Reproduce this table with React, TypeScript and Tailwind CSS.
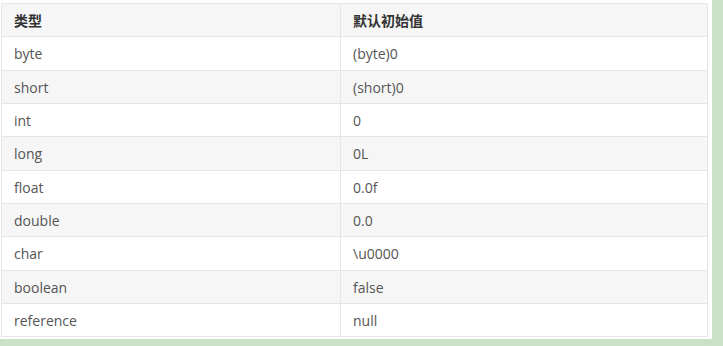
const rows: [string, string][] = [
  ["byte", "(byte)0"],
  ["short", "(short)0"],
  ["int", "0"],
  ["long", "0L"],
  ["float", "0.0f"],
  ["double", "0.0"],
  ["char", "\\u0000"],
  ["boolean", "false"],
  ["reference", "null"],
]

export default function App() {
  return (
    <div className="h-[346px] w-[723px] bg-[#c9e2c5] font-['Open_Sans','Noto_Sans_CJK_SC',sans-serif]">
      <div className="h-[339px] w-[712px] bg-white pl-[1px] pt-[3px]">
        <table className="w-[707px] border-collapse border border-[#e3e3e3] text-[14px] text-[#555]">
          <thead>
            <tr className="h-[33px] bg-[#f6f6f6]">
              <th className="w-[339px] border border-[#e6e6e6] px-3 text-left font-bold text-[#333]">类型</th>
              <th className="border border-[#e6e6e6] px-3 text-left font-bold text-[#333]">默认初始值</th>
            </tr>
          </thead>
          <tbody>
            {rows.map(([t, v], i) => (
              <tr
                key={t}
                className={
                  (i % 3 === 0 ? "h-[34px] " : "h-[33px] ") + (i % 2 === 1 ? "bg-[#f6f6f6]" : "bg-white")
                }
              >
                <td className="border border-[#e6e6e6] px-3">{t}</td>
                <td className="border border-[#e6e6e6] px-3">{v}</td>
              </tr>
            ))}
          </tbody>
        </table>
      </div>
    </div>
  )
}
